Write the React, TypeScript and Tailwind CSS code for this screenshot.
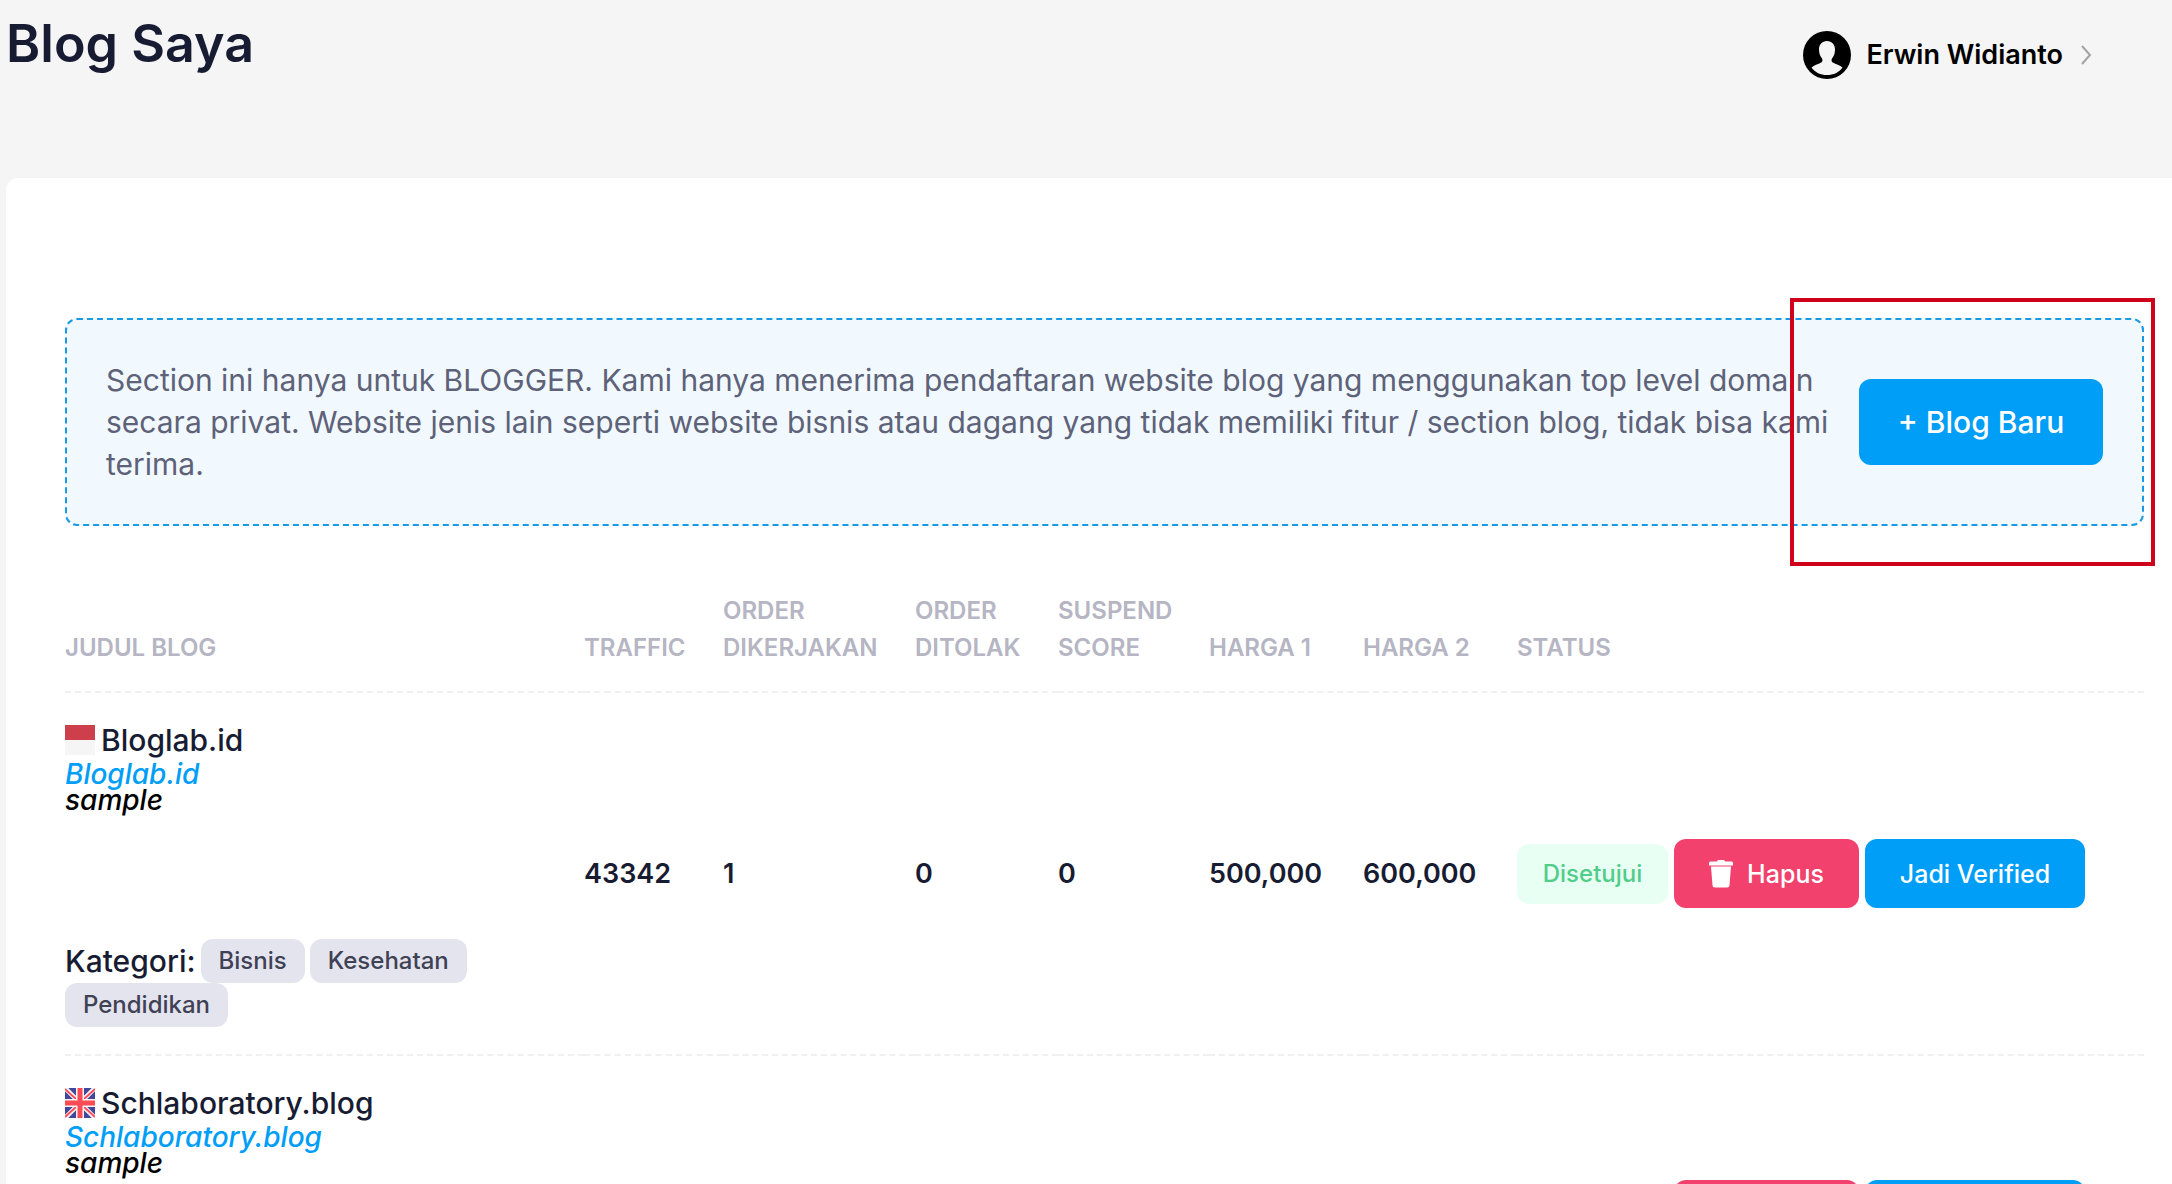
type Blog = {
  title: string;
  flag: 'id' | 'gb';
  traffic?: string;
  done?: string;
  rejected?: string;
  suspend?: string;
  price1?: string;
  price2?: string;
  categories: string[];
  height: string;
};

const blogs: Blog[] = [
  {
    title: 'Bloglab.id',
    flag: 'id',
    traffic: '43342',
    done: '1',
    rejected: '0',
    suspend: '0',
    price1: '500,000',
    price2: '600,000',
    categories: ['Bisnis', 'Kesehatan', 'Pendidikan'],
    height: 'h-[363px]',
  },
  {
    title: 'Schlaboratory.blog',
    flag: 'gb',
    categories: [],
    height: 'h-[318px]',
  },
];

const Flag = ({ country }: { country: 'id' | 'gb' }) => {
  if (country === 'id') {
    return (
      <svg viewBox="0 0 30 30" className="size-[30px] shrink-0">
        <rect width="30" height="30" fill="#f5f5f5" />
        <rect width="30" height="15" fill="#cd3f4b" />
      </svg>
    );
  }
  return (
    <svg viewBox="0 0 30 30" className="size-[30px] shrink-0">
      <rect width="30" height="30" fill="#41479b" />
      <path d="M0 0L30 30M30 0L0 30" stroke="#f5f5f5" strokeWidth="4.600" />
      <path d="M0 1L12 12M30 1L18 12M0 29L12 18M30 29L18 18" stroke="#ff4b55" strokeWidth="1.800" />
      <path d="M15 0V30M0 15H30" stroke="#f5f5f5" strokeWidth="8" />
      <path d="M15 0V30M0 15H30" stroke="#ff4b55" strokeWidth="5" />
    </svg>
  );
};

const Avatar = () => (
  <svg viewBox="0 0 48 48" className="size-12">
    <circle cx="24" cy="24" r="24" fill="#000" />
    <path
      d="M24 10c-5 0-8 3.600-8 8.500 0 3.500 1 6.500 3 9 .8 1.200.6 3.200-.8 4C15 33 11 34.500 8.500 36.500 12 41.500 17.500 44 24 44s12-2.500 15.500-7.500C37 34.500 33 33 29.800 31.500c-1.400-.8-1.600-2.800-.8-4 2-2.500 3-5.500 3-9C32 13.600 29 10 24 10z"
      fill="#f5f5f5"
    />
  </svg>
);

const TrashIcon = () => (
  <svg viewBox="0 0 24 28" className="h-7 w-6">
    <path d="M8 1.500a1.500 1.500 0 0 1 1.500-1.500h5A1.500 1.500 0 0 1 16 1.500h6.500A1.500 1.500 0 0 1 24 3v2.500H0V3a1.500 1.500 0 0 1 1.500-1.500z" fill="#fff" />
    <path d="M2 5.500h20V7H2z" fill="#f8a0b6" />
    <path d="M2 7h20l-1.500 18a2.500 2.500 0 0 1-2.500 2.500H6A2.500 2.500 0 0 1 3.500 25z" fill="#fff" />
  </svg>
);

const App = () => {
  return (
    <div className="h-screen overflow-hidden bg-[#f5f5f5] font-['Inter',sans-serif] text-[#181c32]">
      <header className="flex h-[178px] items-start justify-between pl-[6px] pr-20">
        <h1 className="pt-[14px] text-[52px] leading-[60px] font-semibold">Blog Saya</h1>
        <button className="mt-[31px] flex h-12 items-center text-black">
          <Avatar />
          <span className="ml-[15px] text-[27px] leading-8 font-semibold">Erwin Widianto</span>
          <svg viewBox="0 0 12 22" className="ml-[17px] h-[22px] w-3" fill="none" stroke="#a3a3a3" strokeWidth="2">
            <path d="M2 2l8 9-8 9" />
          </svg>
        </button>
      </header>

      <main className="ml-[6px] min-h-full rounded-tl-xl bg-white pt-[140px] pr-7 pl-[59px]">
        <section className="relative flex items-center gap-2 rounded-xl border-2 border-dashed border-[#1b9ae4] bg-[#f1f9ff] p-[39px]">
          <p className="flex-1 text-[30px] leading-[42px] text-[#5e6278]">
            Section ini hanya untuk BLOGGER. Kami hanya menerima pendaftaran website blog yang menggunakan top level
            domain secara privat. Website jenis lain seperti website bisnis atau dagang yang tidak memiliki fitur /
            section blog, tidak bisa kami terima.
          </p>
          <button className="h-[86px] w-[244px] shrink-0 rounded-xl bg-[#009ef7] text-[30px] font-medium text-white">
            + Blog Baru
          </button>
          <div className="pointer-events-none absolute -top-[22px] -right-[13px] h-[268px] w-[365px] border-4 border-[#d0021b]" />
        </section>

        <table className="mt-[59px] w-full table-fixed border-collapse text-left">
          <colgroup>
            <col className="w-[519px]" />
            <col className="w-[139px]" />
            <col className="w-[192px]" />
            <col className="w-[143px]" />
            <col className="w-[151px]" />
            <col className="w-[154px]" />
            <col className="w-[154px]" />
            <col />
          </colgroup>
          <thead>
            <tr className="h-[107px] border-b-2 border-dashed border-[#eff0f2] align-bottom text-[24px] leading-[37px] text-[#b5b5c3] uppercase [&>th]:pb-[25px] [&>th]:font-semibold">
              <th>Judul Blog</th>
              <th>Traffic</th>
              <th>Order<br />Dikerjakan</th>
              <th>Order<br />Ditolak</th>
              <th>Suspend<br />Score</th>
              <th>Harga 1</th>
              <th>Harga 2</th>
              <th>Status</th>
            </tr>
          </thead>
          <tbody className="text-[27px] leading-[42px] font-semibold">
            {blogs.map((blog) => (
              <tr key={blog.title} className="border-b-2 border-dashed border-[#eff0f2]">
                <td className={`${blog.height} pt-[26px] align-top text-[30px] font-medium`}>
                  <div className="flex items-center gap-[6px]">
                    <Flag country={blog.flag} />
                    <span>{blog.title}</span>
                  </div>
                  <div className="text-[28px] leading-[26px] italic">
                    <a href="#" className="block text-[#009ef7]">{blog.title}</a>
                    <a href="#" className="block text-black">sample</a>
                  </div>
                  {blog.categories.length > 0 && (
                    <div className="mt-[126px] flex max-w-[420px] flex-wrap items-center gap-x-[5px]">
                      <span>Kategori:</span>
                      {blog.categories.map((category) => (
                        <span
                          key={category}
                          className="rounded-xl bg-[#e4e4ef] px-[18px] text-[24px] leading-[44px] text-[#3f4254]"
                        >
                          {category}
                        </span>
                      ))}
                    </div>
                  )}
                </td>
                <td>{blog.traffic}</td>
                <td>{blog.done}</td>
                <td>{blog.rejected}</td>
                <td>{blog.suspend}</td>
                <td>{blog.price1}</td>
                <td>{blog.price2}</td>
                <td>
                  <div className="flex items-center gap-[6px] font-medium">
                    <span className="flex h-[60px] w-[151px] items-center justify-center rounded-xl bg-[#e8fff3] text-[24px] text-[#50cd89]">
                      Disetujui
                    </span>
                    <button className="flex h-[69px] w-[185px] items-center justify-center gap-[14px] rounded-xl bg-[#f1416c] text-[25px] text-white">
                      <TrashIcon />
                      Hapus
                    </button>
                    <button className="h-[69px] w-[220px] rounded-xl bg-[#009ef7] text-[25px] text-white">
                      Jadi Verified
                    </button>
                  </div>
                </td>
              </tr>
            ))}
          </tbody>
        </table>
      </main>
    </div>
  );
};

export default App;
